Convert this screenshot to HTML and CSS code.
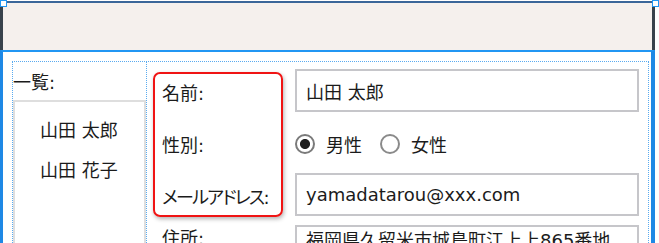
FILE: index.html
```html
<!DOCTYPE html>
<html lang="ja">
<head>
<meta charset="utf-8">
<title>Form</title>
<link rel="stylesheet" href="styles.css">
</head>
<body>
<div class="window">
  <span class="handle handle-tl"></span>
  <span class="handle handle-tr"></span>
  <div class="titlebar"></div>
  <div class="client">
    <div class="panels">
      <div class="list-panel">
        <div class="list-title">一覧:</div>
        <ul class="list">
          <li>山田 太郎</li>
          <li>山田 花子</li>
        </ul>
      </div>
      <div class="form-panel">
        <div class="highlight"></div>
        <div class="form-grid">
          <label class="field-label" for="name">名前:</label>
          <input class="text-input" id="name" type="text" value="山田 太郎">

          <span class="field-label">性別:</span>
          <div class="radio-group">
            <input class="radio" type="radio" name="sex" id="male" checked>
            <label class="radio-text" for="male">男性</label>
            <input class="radio radio-second" type="radio" name="sex" id="female">
            <label class="radio-text" for="female">女性</label>
          </div>

          <label class="field-label field-label-kana" for="mail">メールアドレス:</label>
          <input class="text-input" id="mail" type="text" value="yamadatarou@xxx.com">

          <label class="field-label field-label-top" for="addr">住所:</label>
          <textarea class="text-area" id="addr" rows="3">福岡県久留米市城島町江上上865番地</textarea>
        </div>
      </div>
    </div>
  </div>
</div>
</body>
</html>
```
FILE: styles.css
```css
html, body {
  margin: 0;
  height: 243px;
  overflow: hidden;
  background: #ffffff;
}

body {
  font-family: "DejaVu Sans", "Noto Sans CJK JP", sans-serif;
  font-size: 18px;
  color: #1b1b1b;
  font-feature-settings: "palt";
}

.window {
  position: relative;
  width: 655px;
  padding-top: 1px;
  box-sizing: border-box;
}

.handle {
  position: absolute;
  top: 0;
  width: 7px;
  height: 7px;
  box-sizing: border-box;
  background: #ffffff;
  border: 1px solid #2196f3;
  z-index: 2;
}

.handle-tl { left: 0; }
.handle-tr { right: -4px; }

.titlebar {
  height: 49px;
  box-sizing: border-box;
  background: #f5f0ed;
  border-top: 2px solid #3a6699;
  border-left: 3px solid #38424c;
  border-right: 3px solid #38424c;
}

.client {
  border-top: 2px solid #2196f3;
  border-left: 3px solid #1e88e5;
  border-right: 4px solid #1e88e5;
  padding: 9px 0 0 9px;
  height: 300px;
}

.panels {
  display: flex;
  width: 637px;
  height: 260px;
  box-sizing: border-box;
  border: 1px dotted #5aabf0;
  border-bottom: none;
}

.list-panel {
  width: 134px;
  flex: none;
  box-sizing: border-box;
  border-right: 1px dotted #5aabf0;
  display: flex;
  flex-direction: column;
}

.list-title {
  margin-top: 8px;
  margin-bottom: 4px;
  height: 26px;
  line-height: 26px;
}

.list {
  flex: 1;
  margin: 0;
  padding: 9px 0 0 25px;
  list-style: none;
  border: 2px solid #dedede;
  border-bottom: none;
}

.list li {
  line-height: 40px;
  height: 40px;
}

.form-panel {
  position: relative;
  flex: 1;
  padding: 7px 0 0 15px;
}

.highlight {
  position: absolute;
  left: 6px;
  top: 10px;
  width: 130px;
  height: 145px;
  box-sizing: border-box;
  border: 2px solid #f01414;
  border-radius: 7px;
  box-shadow: 1px 2px 4px rgba(0, 0, 0, 0.3);
  pointer-events: none;
}

.form-grid {
  display: grid;
  grid-template-columns: 133px 344px;
  grid-auto-rows: 43px;
  row-gap: 9px;
}

.field-label {
  display: flex;
  align-items: center;
  padding-top: 3px;
  white-space: nowrap;
}

.field-label-kana {
  letter-spacing: -1.7px;
}

.field-label-top {
  align-items: flex-start;
  padding-top: 1px;
  line-height: 26px;
}

.text-input,
.text-area {
  box-sizing: border-box;
  width: 100%;
  margin: 0;
  padding: 0 9px;
  border: 2px solid #c6c6ca;
  border-radius: 0;
  background: #ffffff;
  font: inherit;
  color: inherit;
  font-feature-settings: "palt";
  outline: none;
}

.text-input {
  height: 43px;
}

.text-area {
  height: 80px;
  padding-top: 1px;
  line-height: 26px;
  resize: none;
  overflow: hidden;
}

.radio-group {
  display: flex;
  align-items: center;
  padding-top: 2px;
}

.radio {
  appearance: none;
  -webkit-appearance: none;
  width: 20px;
  height: 20px;
  margin: 0;
  box-sizing: border-box;
  border: 2px solid #8a8a8a;
  border-radius: 50%;
  background: #ffffff;
}

.radio:checked {
  border-color: #7a7a7a;
  background: radial-gradient(circle, #1e1e1e 0 4.6px, #ffffff 5.4px);
}

.radio-text {
  margin-left: 11px;
}

.radio-second {
  margin-left: 18px;
}
```
